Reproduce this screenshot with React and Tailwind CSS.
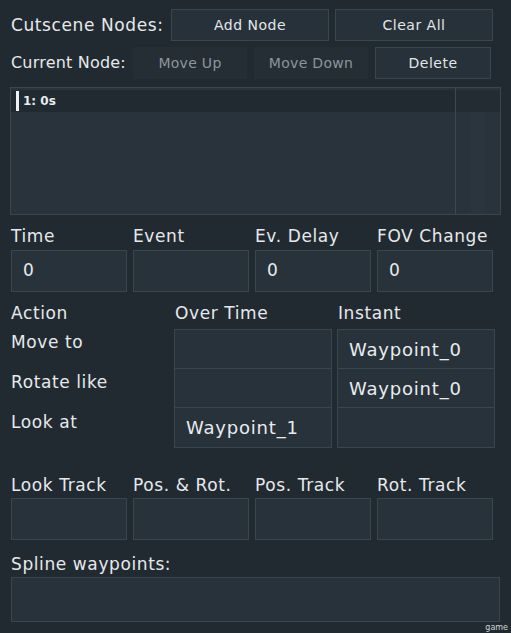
import React from "react";

const font = { fontFamily: '"DejaVu Sans", "Liberation Sans", sans-serif' };

function Box({ className = "", children }) {
  return (
    <div className={"border border-[#3a464e] bg-[#28323a] flex items-center text-[17px] tracking-[0.6px] text-[#e8ecee] " + className}>
      {children}
    </div>
  );
}

const lbl = "text-[17px] tracking-[0.6px] leading-[18px] whitespace-nowrap";

export default function App() {
  return (
    <div className="w-[511px] h-[633px] bg-[#222a31] text-[#e6e9eb] relative overflow-hidden" style={font}>
      {/* Row 1 */}
      <div className="flex items-center h-[32px] mt-[9px] pl-[11px]">
        <div className={"w-[160px] " + lbl}>Cutscene Nodes:</div>
        <div className="w-[158px] h-[32px] border border-[#3a464e] bg-[#27313a] flex items-center justify-center text-[14px] tracking-[0.5px] text-[#e2e6e8]">Add Node</div>
        <div className="w-[158px] h-[32px] ml-[6px] border border-[#3a464e] bg-[#27313a] flex items-center justify-center text-[14px] tracking-[0.5px] text-[#e2e6e8]">Clear All</div>
      </div>
      {/* Row 2 */}
      <div className="flex items-center h-[32px] mt-[6px] pl-[11px]">
        <div className="w-[122px] shrink-0 text-[16px] tracking-[0.2px] leading-[18px] whitespace-nowrap">Current Node:</div>
        <div className="w-[114px] h-[32px] bg-[#252d35] flex items-center justify-center text-[14px] tracking-[0.3px] text-[#8c969c]">Move Up</div>
        <div className="w-[114px] h-[32px] ml-[7px] bg-[#252d35] flex items-center justify-center text-[14px] tracking-[0.3px] text-[#8c969c]">Move Down</div>
        <div className="w-[116px] h-[32px] ml-[7px] border border-[#3a464e] bg-[#27313a] flex items-center justify-center text-[14px] tracking-[0.5px] text-[#e2e6e8]">Delete</div>
      </div>
      {/* List */}
      <div className="ml-[10px] mt-[8px] w-[491px] h-[128px] border border-[#3a464e] bg-[#28333b] flex">
        <div className="flex-1 flex flex-col">
          <div className="h-[22px] mt-[2px] bg-[#212a31] flex items-center">
            <div className="w-[3px] h-[20px] bg-[#eef0f2] ml-[5px]"></div>
            <div className="ml-[4px] text-[12px] font-bold text-[#e8ecee]">1: 0s</div>
          </div>
        </div>
        <div className="w-[45px] border-l border-[#3d4850] flex flex-col">
          <div className="h-[22px] mt-[2px] bg-[#232c33]"></div>
          <div className="flex-1 flex justify-center"><div className="w-[14px] bg-[#2b353d]"></div></div>
        </div>
      </div>
      {/* Time row */}
      <div className="grid grid-cols-[116px_116px_116px_116px] gap-x-[6px] pl-[11px] mt-[12px]">
        <div className={lbl + " h-[23px]"}>Time</div>
        <div className={lbl + " h-[23px]"}>Event</div>
        <div className={lbl + " h-[23px]"}>Ev. Delay</div>
        <div className={lbl + " h-[23px]"}>FOV Change</div>
        <Box className="h-[42px] pl-[11px]">0</Box>
        <Box className="h-[42px]"></Box>
        <Box className="h-[42px] pl-[11px]">0</Box>
        <Box className="h-[42px] pl-[11px]">0</Box>
      </div>
      {/* Action */}
      <div className="flex pl-[11px] mt-[8px]">
        <div className="w-[163px] flex flex-col">
          <div className="text-[17px] tracking-[0.6px] h-[29px] leading-[26px]">Action</div>
          <div className="text-[17px] tracking-[0.6px] h-[40px] leading-[26px]">Move to</div>
          <div className="text-[17px] tracking-[0.6px] h-[40px] leading-[26px]">Rotate like</div>
          <div className="text-[17px] tracking-[0.6px] h-[40px] leading-[26px]">Look at</div>
        </div>
        <div className="w-[158px] flex flex-col">
          <div className="text-[17px] tracking-[0.6px] h-[29px] leading-[26px] pl-[1px]">Over Time</div>
          <div className="border border-[#3a464e] bg-[#28323a] flex flex-col">
            <div className="h-[39px] border-b border-[#3a464e]"></div>
            <div className="h-[39px] border-b border-[#3a464e]"></div>
            <div className="h-[39px] flex items-center pl-[11px] text-[18px] tracking-[0.8px] text-[#e8ecee]">Waypoint_1</div>
          </div>
        </div>
        <div className="w-[158px] ml-[5px] flex flex-col">
          <div className="text-[17px] tracking-[0.6px] h-[29px] leading-[26px] pl-[1px]">Instant</div>
          <div className="border border-[#3a464e] bg-[#28323a] flex flex-col">
            <div className="h-[39px] border-b border-[#3a464e] flex items-center pl-[11px] text-[18px] tracking-[0.8px] text-[#e8ecee]">Waypoint_0</div>
            <div className="h-[39px] border-b border-[#3a464e] flex items-center pl-[11px] text-[18px] tracking-[0.8px] text-[#e8ecee]">Waypoint_0</div>
            <div className="h-[39px]"></div>
          </div>
        </div>
      </div>
      {/* Tracks */}
      <div className="grid grid-cols-[116px_116px_116px_116px] gap-x-[6px] pl-[11px] mt-[27px]">
        <div className={lbl + " h-[22px]"}>Look Track</div>
        <div className={lbl + " h-[22px]"}>Pos. &amp; Rot.</div>
        <div className={lbl + " h-[22px]"}>Pos. Track</div>
        <div className={lbl + " h-[22px]"}>Rot. Track</div>
        <Box className="h-[42px]"></Box>
        <Box className="h-[42px]"></Box>
        <Box className="h-[42px]"></Box>
        <Box className="h-[42px]"></Box>
      </div>
      <div className={"pl-[11px] mt-[15px] h-[22px] " + lbl}>Spline waypoints:</div>
      <div className="ml-[11px] w-[489px] h-[45px] border border-[#3a464e] bg-[#28323a]"></div>
      <div className="absolute right-[3px] bottom-[1px] text-[8px] text-[#cfd4d6] leading-none">game</div>
    </div>
  );
}
